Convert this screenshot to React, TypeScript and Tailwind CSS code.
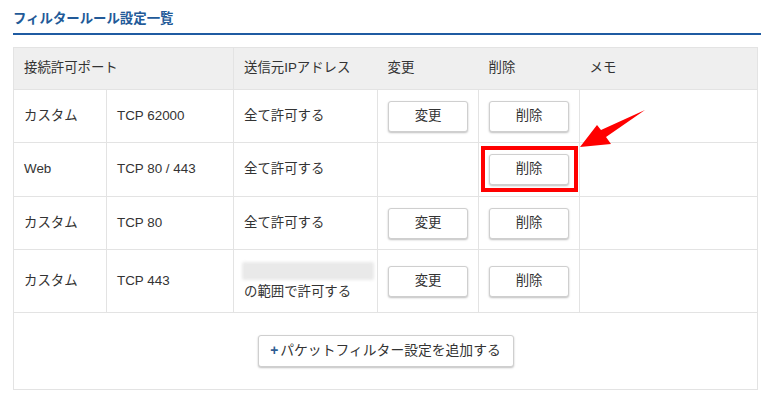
import React from "react";

const font = { fontFamily: '"Liberation Sans", "Noto Sans CJK JP", sans-serif' };

function Btn({ children }: { children: React.ReactNode }) {
  return (
    <button className="w-[80px] h-[31px] rounded-[3px] border border-[#cfcfcf] bg-white text-[13.4px] text-[#333] shadow-[0_1px_2px_rgba(0,0,0,0.25)]">
      {children}
    </button>
  );
}

const td = "border border-[#e3e3e3] px-[10px] text-[13.4px] text-[#333] align-middle";
const tdBtn = "border border-[#e3e3e3] pl-[10px] align-middle";

export default function App() {
  return (
    <div className="relative w-[774px] h-[405px] bg-white overflow-hidden" style={font}>
      <div className="mx-[13px] pt-[9px]">
        <div className="text-[13.4px] leading-[20px] font-bold text-[#225a98] pb-[4px] border-b-2 border-[#1f5ba2]">
          フィルタールール設定一覧
        </div>
        <table className="mt-[12px] w-[744px] border-collapse table-fixed">
          <colgroup>
            <col className="w-[93px]" />
            <col className="w-[127px]" />
            <col className="w-[144px]" />
            <col className="w-[101px]" />
            <col className="w-[101px]" />
            <col className="w-[178px]" />
          </colgroup>
          <thead>
            <tr className="h-[42px] bg-[#efefef]">
              <th colSpan={2} className={`${td} text-left font-normal`}>接続許可ポート</th>
              <th className={`${td} text-left font-normal border-x-0`}>送信元IPアドレス</th>
              <th className={`${td} text-left font-normal border-x-0`}>変更</th>
              <th className={`${td} text-left font-normal border-x-0`}>削除</th>
              <th className={`${td} text-left font-normal border-l-0`}>メモ</th>
            </tr>
          </thead>
          <tbody>
            <tr className="h-[53px]">
              <td className={td}>カスタム</td>
              <td className={td}>TCP 62000</td>
              <td className={td}>全て許可する</td>
              <td className={tdBtn}><Btn>変更</Btn></td>
              <td className={tdBtn}><Btn>削除</Btn></td>
              <td className={td}></td>
            </tr>
            <tr className="h-[54px]">
              <td className={td}>Web</td>
              <td className={td}>TCP 80 / 443</td>
              <td className={td}>全て許可する</td>
              <td className={td}></td>
              <td className={`${tdBtn} relative`}>
                <Btn>削除</Btn>
                <div className="absolute left-[2px] right-[1px] top-[3px] bottom-[4px] border-[4px] border-[#ff0000]" />
              </td>
              <td className={td}></td>
            </tr>
            <tr className="h-[53px]">
              <td className={td}>カスタム</td>
              <td className={td}>TCP 80</td>
              <td className={td}>全て許可する</td>
              <td className={tdBtn}><Btn>変更</Btn></td>
              <td className={tdBtn}><Btn>削除</Btn></td>
              <td className={td}></td>
            </tr>
            <tr className="h-[63px]">
              <td className={td}>カスタム</td>
              <td className={td}>TCP 443</td>
              <td className={`${td} pl-[8px]`}>
                <div className="w-[132px] h-[18px] bg-[#e9e9e9] blur-[1.5px] rounded-[2px]" />
                <div className="mt-[3px] pl-[2px] leading-[18px]">の範囲で許可する</div>
              </td>
              <td className={tdBtn}><Btn>変更</Btn></td>
              <td className={tdBtn}><Btn>削除</Btn></td>
              <td className={td}></td>
            </tr>
            <tr className="h-[77px]">
              <td colSpan={6} className="border border-[#e3e3e3] text-center align-middle">
                <button className="w-[256px] h-[32px] rounded-[3px] border border-[#cfcfcf] bg-white text-[13.8px] text-[#333] shadow-[0_1px_2px_rgba(0,0,0,0.25)]">
                  <span className="text-[#2f5d93] font-semibold mr-[2px]">+</span>パケットフィルター設定を追加する
                </button>
              </td>
            </tr>
          </tbody>
        </table>
      </div>
      <svg className="absolute left-0 top-0" width="774" height="405" viewBox="0 0 774 405">
        <polygon
          points="580,147 597,125 601,130 645,110 606,137 611,144"
          fill="#ff0000"
        />
      </svg>
    </div>
  );
}
